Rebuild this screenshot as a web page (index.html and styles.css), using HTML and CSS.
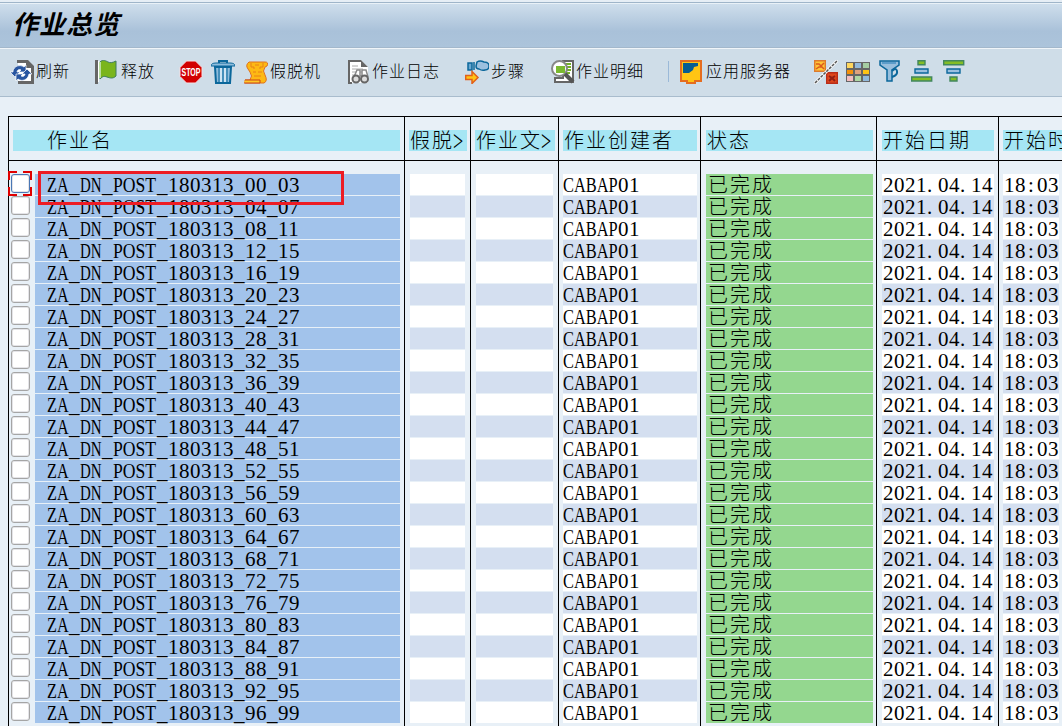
FILE: index.html
```html
<!DOCTYPE html>
<html lang="zh-CN">
<head>
  <meta charset="UTF-8">
  <meta name="viewport" content="width=device-width, initial-scale=1">
  <title>作业总览</title>
  <link rel="stylesheet" href="styles.css">
</head>
<body>

<header>
  <h1>作业总览</h1>
</header>

<nav class="toolbar">
  <a class="tool refresh">
    <svg viewBox="0 0 24 24"><path d="M7 0h11l6 6v18H8v-3h13V8h-5V3H7z" fill="#666"/><path d="M8 3h8v5h5v13H8z" fill="#fff"/><path d="M3 11C4 6 10 4 14 7l2-2v7H9l2-2c-2-1-4 0-4 2h3l-5 5-5-5h3z" fill="#2855a0" stroke="#fff" stroke-width=".7"/><path d="M19 14c-1 6-7 8-11 5l-2 2v-7h7l-2 2c2 1 4 0 4-2h-3l5-5 5 5z" fill="#2855a0" stroke="#fff" stroke-width=".7"/></svg>
    刷新
  </a>
  <a class="tool release">
    <svg viewBox="0 0 24 24"><path d="M0 0h3v24H0z" fill="#666"/><path d="M3 1h1v21H3z" fill="#fff"/><path d="M5 2c3-3 6-1 8 0s4 1 8-1v15c-3 3-6 2-9 1s-4-1-7 2z" fill="#7ab51d" stroke="#3f7d5e"/><path d="M5 2v16" stroke="#b9dda0" stroke-width="2"/></svg>
    释放
  </a>
  <a class="tool stop">
    <svg viewBox="0 0 24 24"><path d="M7.500 1h9L23 7.500v9L16.500 23h-9L1 16.500v-9z" fill="#d20000" stroke="#f4dfe3"/><text x="2.500" y="15.500" textLength="19" lengthAdjust="spacingAndGlyphs" class="stop-text">STOP</text></svg>
  </a>
  <a class="tool delete">
    <svg viewBox="0 0 24 24"><path d="M4 7h16l-1 16H5z" fill="#8fbcdc" stroke="#0b679b" stroke-width="2"/><path d="M8 8v14M12 8v14M16 8v14" stroke="#1672a5" stroke-width="1.200"/><path d="M10 8v14M14 8v14" stroke="#e3f1fa" stroke-width="1.500"/><path d="M0 6q0-3 5-3h14q5 0 5 3z" fill="#8ebddd" stroke="#0b679b"/><path d="M8 3V1h8v2" fill="none" stroke="#0b679b" stroke-width="2"/></svg>
  </a>
  <a class="tool spool">
    <svg viewBox="0 0 24 24"><path d="M5 2h16q4 0 2 4l-2 1q-3 4 0 8 3 6-1 8H1v-3h5q3-4 0-8l-2-3q-3-4 1-7z" fill="#fdb913" stroke="#e0701c"/><path d="M7 3v4h3v2M19 3v4h-3v2M11 5h4M9 12h3M14 12h4M10 16h7" fill="none" stroke="#e98018"/><path d="M1 20h15v3H0" fill="#ffc928" stroke="#c9451b"/></svg>
    假脱机
  </a>
  <a class="tool log">
    <svg viewBox="0 0 24 24"><path d="M1 0h13l7 7v16H1z" fill="#fff"/><path d="M1 0v24h4v-2H3V2h11v5h7L14 0z" fill="#666"/><path d="M5 6h6M5 9h11M5 12h11M5 15h5" stroke="#aaa"/><path d="M7 17l3-7h3v6h2v-6h4l2 7" fill="#fff" stroke="#888" stroke-width="1.500"/><circle cx="9" cy="19" r="3.500" fill="#ddd" stroke="#666" stroke-width="2"/><circle cx="17.500" cy="19" r="3.500" fill="#ddd" stroke="#666" stroke-width="2"/></svg>
    作业日志
  </a>
  <a class="tool steps">
    <svg viewBox="0 0 24 24"><path d="M3 3h4v7H3z" fill="#68a7d0" stroke="#0b679b" stroke-width="1.500"/><path d="M9 2v8" stroke="#0b679b" stroke-width="1.500"/><path d="M12 2q3-2 7 0 5 0 5 4t-4 4q-3 1-6-1-3 0-3-3z" fill="#9bc0df" stroke="#0b679b" stroke-width="1.500"/><path d="M.700 15.500H7v-4l6 6-6 6v-4H.700z" fill="#ffc415" stroke="#e2611a" stroke-width="1.500"/></svg>
    步骤
  </a>
  <a class="tool detail">
    <svg viewBox="0 0 24 24"><path d="M12 1h10v21H4v-4h8z" fill="#fff" stroke="#666" stroke-width="2"/><path d="M15 4h5M15 7h5M15 10h5M15 13h4" stroke="#73af28" stroke-width="2"/><circle cx="8.500" cy="8.500" r="7.500" fill="#fff" stroke="#888" stroke-width="2"/><path d="M5 6h9v7H5z" fill="#7bb930"/><path d="M14 14l8 8" stroke="#555" stroke-width="4"/></svg>
    作业明细
  </a>
  <i class="separator"></i>
  <a class="tool server">
    <svg viewBox="0 0 24 24"><path d="M1 1h20v20h-6v2H7v-2H1z" fill="#ffc514" stroke="#e56d20" stroke-width="2"/><path d="M3 3h15v3l-4 1-1 3-4 3H3z" fill="#075d91"/></svg>
    应用服务器
  </a>
  <div class="icon-group">
    <svg viewBox="0 0 24 24"><path d="M.700.700h10.600v10.600H.700z" fill="#ffc536" stroke="#dd7a2d" stroke-width="1.400"/><path d="M2 4h3l2 2 3-3M2 9l3-2h3l2 2" fill="none" stroke="#dd5a1d" stroke-width="1.500"/><path d="M12.700 12.700h10.600v10.600H12.700z" fill="#df461c" stroke="#b92c18" stroke-width="1.400"/><path d="M15 16l3 2 3-2M15 21l3-3 3 3" fill="none" stroke="#921f15" stroke-width="2"/><path d="M.500 23.500l23-23" stroke="#fff" stroke-width="3"/><path d="M1 23L23 1" stroke="#555" stroke-width="1.500" stroke-dasharray="3 1"/></svg>
    <svg viewBox="0 0 24 24" shape-rendering="crispEdges"><path d="M0 2h24v20H0z" fill="#666"/><path d="M1 3h6v5H1z" fill="#ffd75e"/><path d="M9 3h6v5H9z" fill="#91b9dc"/><path d="M17 3h6v5h-6z" fill="#a5cda2"/><path d="M1 10h6v4H1z" fill="#f4910b"/><path d="M9 10h6v4H9z" fill="#dfa17d"/><path d="M17 10h6v4h-6z" fill="#ffc415"/><path d="M1 16h6v5H1z" fill="#f3bec0"/><path d="M9 16h6v5H9z" fill="#aed6a3"/><path d="M17 16h6v5h-6z" fill="#91b9dc"/></svg>
    <svg viewBox="0 0 24 24"><path d="M2 1h19v4l-7 5v11H9V10L2 5z" fill="#98bfdd" stroke="#0b679b" stroke-width="1.500"/><path d="M14 11q4-4 5 0t-5 6" fill="none" stroke="#0b679b" stroke-width="2"/><path d="M4 3h14" stroke="#5c9dca" stroke-width="2"/></svg>
    <svg viewBox="0 0 24 24"><path d="M8 .700h7v4H8zM1.700 17h20v4h-20z" fill="#83bd25" stroke="#42875d" stroke-width="1.400"/><path d="M5 9h13v4H5z" fill="#9bc0df" stroke="#0b679b" stroke-width="1.400"/></svg>
    <svg viewBox="0 0 24 24"><path d="M1.700.700h20v4h-20zM8 17h7v4H8z" fill="#83bd25" stroke="#42875d" stroke-width="1.400"/><path d="M5 9h13v4H5z" fill="#9bc0df" stroke="#0b679b" stroke-width="1.400"/></svg>
  </div>
</nav>

<main class="job-list">
  <div class="row head">
    <div class="cell"><span>作业名</span></div>
    <div class="cell"><span>假脱<b>&gt;</b></span></div>
    <div class="cell"><span>作业文<b>&gt;</b></span></div>
    <div class="cell"><span>作业创建者</span></div>
    <div class="cell"><span>状态</span></div>
    <div class="cell"><span>开始日期</span></div>
    <div class="cell"><span>开始时</span></div>
  </div>
  <div class="row spacer"><i></i><i></i><i></i><i></i><i></i><i></i><i></i></div>
  <div id="jobs"></div>
  <div class="row spacer"><i></i><i></i><i></i><i></i><i></i><i></i><i></i></div>
  <div class="focus-corners"></div>
  <div class="highlight"></div>
</main>

<script>
  const jobs = document.getElementById('jobs');
  const pad = n => String(n).padStart(2, '0');

  // each job covers four numbers: 00_03, 04_07 ...
  for (let i = 0; i < 100; i += 4) {
    const row = document.createElement('div');
    row.className = 'row job';
    row.innerHTML = `
      <div class="cell name"><input type="checkbox"><span><em class="za">ZA</em>_<em class="dn">DN</em>_<em class="post">POST</em>_180313_${pad(i)}_${pad(i + 3)}</span></div>
      <div class="cell empty"><span></span></div>
      <div class="cell empty"><span></span></div>
      <div class="cell user"><span><em class="cabap">CABAP</em>01</span></div>
      <div class="cell status"><span>已完成</span></div>
      <div class="cell"><span>2021<em class="dot">.</em>04<em class="dot">.</em>14</span></div>
      <div class="cell"><span>18<em class="colon">:</em>03</span></div>`;
    jobs.appendChild(row);
  }
</script>

</body>
</html>
```
FILE: styles.css
```css
* { box-sizing: border-box; }
body { margin: 0; background: #e8f0f7; color: #000; font-family: "Liberation Serif", "Noto Sans CJK SC", serif; overflow: hidden; }

header { height: 48px; border-top: 2px solid #e6eef5; border-bottom: 1px solid #a3b8cc; box-shadow: inset 0 1px #9fb5c9, inset 0 2px #e9f1f7; background: linear-gradient(#d1e0ed, #a9c1d9 65%, #acc4db); padding-left: 12px; }
h1 { margin: 0; font: italic bold 26px/42px "Noto Sans CJK SC", sans-serif; letter-spacing: 1px; }

.toolbar { height: 49px; display: flex; align-items: flex-start; padding: 11px 0 0 10px; background: #cfdde8; border-top: 1px solid #f0f5f9; border-bottom: 1px solid #a9bccd; font: 300 16px/20px "Noto Sans CJK SC", sans-serif; letter-spacing: 1px; white-space: nowrap; }
.toolbar svg { width: 24px; height: 24px; flex: none; }
.tool { display: flex; gap: 2px; flex: none; }
.release { margin-left: 25px; }
.stop { margin-left: 24px; }
.delete { margin-left: 8px; }
.spool { margin-left: 9px; }
.log { margin-left: 26px; gap: 1px; }
.steps { margin-left: 25px; }
.detail { margin-left: 26px; gap: 1px; }
.separator { width: 1px; height: 21px; margin: 1px 11px 0 24px; background: #9bb9d8; }
.icon-group { display: flex; gap: 8px; margin-left: 23px; }
.stop-text { font: bold 10px "Liberation Sans", sans-serif; fill: #fff; letter-spacing: 0; }

.job-list { position: relative; height: 610px; margin: 19px 0 0 8px; border-top: 1px solid #000; overflow: hidden; }
.row { display: grid; grid-template-columns: 396px 66px 88px 142px 176px 122px 64px; }
.cell { border-left: 1px solid #000; padding: 0 3px 0 4px; display: flex; }
.cell span { flex: 1; height: 21px; padding-left: 1px; font-size: 21px; line-height: 23px; letter-spacing: .5px; white-space: nowrap; }

.cell:nth-child(1) { padding-right: 4px; }
.cell:nth-child(3), .cell:nth-child(4) { padding-left: 4px; }
.cell:nth-child(5), .cell:nth-child(6) { padding-left: 5px; }
.cell:nth-child(6) { padding-right: 4px; }

.head { height: 44px; border-bottom: 1px solid #000; }
.head .cell { padding-top: 13px; }
.head span { background: #a5e6f4; font: 300 20px/19px "Noto Sans CJK SC", sans-serif; letter-spacing: 2px; }
.head .cell:first-child span { padding-left: 34px; }
.head b { display: inline-block; margin-left: -1px; width: 9px; font: 19px/19px "Liberation Serif", serif; letter-spacing: 0; transform-origin: 0 60%; transform: scale(.95, 1.6); }

.spacer { height: 13px; }
.spacer i { border-left: 1px solid #000; }

.job { height: 22px; }
.job span { background: #fff; }
.job:nth-child(even) span { background: #d4dff0; }
.job .name span { background: #a2c3eb; padding-left: 12px; }
.job .status span { background: #94d78f; font: 300 20px/19px "Noto Sans CJK SC", sans-serif; letter-spacing: 2px; padding-left: 2px; }
.job .empty { padding: 0 5px; }
.job .user span { padding-left: 0; }
.job .name { padding-left: 2px; }
.name input { appearance: none; width: 19px; height: 19px; margin: 0 5px 0 0; border: 1px solid #a5a5a5; border-radius: 3px; background: #fff; box-shadow: inset 0 0 0 1px #e4e4e8; }
.job:first-child input { border-color: #4a78b5; }

/* squeeze capitals into the fixed 11px character grid */
em { font-style: normal; }
.za, .dn, .post, .cabap { display: inline-block; transform-origin: 0 0; letter-spacing: 0; }
.za { width: 22px; transform: scaleX(.77); }
.dn { width: 22px; transform: scaleX(.71); }
.post { width: 44px; transform: scaleX(.84); }
.cabap { width: 55px; transform: scaleX(.78); }
.dot { letter-spacing: 5.75px; }
.colon { padding-left: 2px; letter-spacing: 3.150px; }

.focus-corners { position: absolute; left: 0; top: 54px; width: 24px; height: 25px; background: linear-gradient(#e00000 0 0) 0 0 / 9px 2px, linear-gradient(#e00000 0 0) 0 0 / 2px 9px, linear-gradient(#e00000 0 0) 100% 0 / 9px 2px, linear-gradient(#e00000 0 0) 100% 0 / 2px 9px, linear-gradient(#e00000 0 0) 0 100% / 9px 2px, linear-gradient(#e00000 0 0) 0 100% / 2px 9px, linear-gradient(#e00000 0 0) 100% 100% / 9px 2px, linear-gradient(#e00000 0 0) 100% 100% / 2px 9px; background-repeat: no-repeat; }
.highlight { position: absolute; left: 30px; top: 54px; width: 306px; height: 34px; border: 3px solid #ed1c24; }
```
